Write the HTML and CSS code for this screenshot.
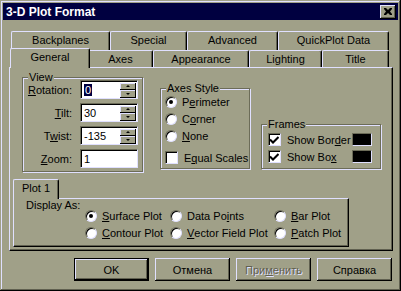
FILE: index.html
```html
<!DOCTYPE html>
<html lang="en">
<head>
  <meta charset="UTF-8">
  <title>3-D Plot Format</title>
  <link rel="stylesheet" href="styles.css">
</head>
<body>
  <div class="window">
    <div class="titlebar">
      <span class="title">3-D Plot Format</span>
      <div class="close">
        <svg width="8" height="7" viewBox="0 0 8 7"><path d="M0 0h2l2 2 2-2h2v1L6 3.5 8 6v1H6L4 5 2 7H0V6l2-2.5L0 1z" fill="#000"/></svg>
      </div>
    </div>

    <div class="tabs">
      <div class="tab-row back">
        <div class="tab" style="width:99px">Backplanes</div>
        <div class="tab" style="width:77px">Special</div>
        <div class="tab" style="width:91px">Advanced</div>
        <div class="tab" style="width:111px">QuickPlot Data</div>
      </div>
      <div class="tab-row front">
        <div class="tab active" style="width:80px">General</div>
        <div class="tab" style="width:65px">Axes</div>
        <div class="tab" style="width:96px">Appearance</div>
        <div class="tab" style="width:73px">Lighting</div>
        <div class="tab" style="width:67px">Title</div>
      </div>
    </div>

    <div class="panel">
      <div class="groups">
        <div class="group view">
          <span class="group-label">View</span>
          <div class="field-row">
            <span class="field-label"><u>R</u>otation:</span>
            <div class="field"><span class="sel">0</span><div class="spin"><div class="spin-btn"><i class="up"></i></div><div class="spin-btn"><i class="down"></i></div></div></div>
          </div>
          <div class="field-row">
            <span class="field-label"><u>T</u>ilt:</span>
            <div class="field"><span>30</span><div class="spin"><div class="spin-btn"><i class="up"></i></div><div class="spin-btn"><i class="down"></i></div></div></div>
          </div>
          <div class="field-row">
            <span class="field-label">T<u>w</u>ist:</span>
            <div class="field"><span>-135</span><div class="spin"><div class="spin-btn"><i class="up"></i></div><div class="spin-btn"><i class="down"></i></div></div></div>
          </div>
          <div class="field-row">
            <span class="field-label"><u>Z</u>oom:</span>
            <div class="field"><span>1</span></div>
          </div>
        </div>

        <div class="group axes">
          <span class="group-label">Axes Style</span>
          <div class="opt"><span class="radio checked"></span>P<u>e</u>rimeter</div>
          <div class="opt"><span class="radio"></span>C<u>o</u>rner</div>
          <div class="opt"><span class="radio"></span><u>N</u>one</div>
          <div class="opt gap"><span class="check"></span>E<u>q</u>ual Scales</div>
        </div>

        <div class="group frames">
          <span class="group-label">Frames</span>
          <div class="opt"><span class="check on"><svg width="9" height="8" viewBox="0 0 9 8"><path d="M0 3.5l3 3L8.5 1" stroke="#000" stroke-width="2" fill="none"/></svg></span><span class="grow">Show Bor<u>d</u>er</span><span class="swatch"></span></div>
          <div class="opt"><span class="check on"><svg width="9" height="8" viewBox="0 0 9 8"><path d="M0 3.5l3 3L8.5 1" stroke="#000" stroke-width="2" fill="none"/></svg></span><span class="grow">Show Bo<u>x</u></span><span class="swatch"></span></div>
        </div>
      </div>

      <div class="subtabs">
        <div class="tab sub active">Plot 1</div>
      </div>
      <div class="subpanel">
        <span class="display-label">Display As:</span>
        <div class="plot-grid">
          <div class="opt"><span class="radio checked"></span><u>S</u>urface Plot</div>
          <div class="opt"><span class="radio"></span>Data Po<u>i</u>nts</div>
          <div class="opt"><span class="radio"></span><u>B</u>ar Plot</div>
          <div class="opt"><span class="radio"></span><u>C</u>ontour Plot</div>
          <div class="opt"><span class="radio"></span><u>V</u>ector Field Plot</div>
          <div class="opt"><span class="radio"></span><u>P</u>atch Plot</div>
        </div>
      </div>
    </div>

    <div class="buttons">
      <button class="default">OK</button>
      <button>Отмена</button>
      <button class="disabled">При<u>м</u>енить</button>
      <button>Справка</button>
    </div>
  </div>
</body>
</html>
```

FILE: styles.css
```css
body {
  margin: 0;
  font-family: "Liberation Sans", Arial, sans-serif;
  font-size: 11px;
  color: #000;
}
.window {
  width: 401px;
  height: 291px;
  box-sizing: border-box;
  padding: 3px;
  background: #a0a088;
  box-shadow: inset -1px -1px #000, inset 1px 1px #a0a088, inset -2px -2px #606050, inset 2px 2px #e0e0ff;
}
.titlebar {
  height: 17px;
  background: #000040;
  display: flex;
  align-items: center;
  justify-content: space-between;
  padding: 0 2px 0 3px;
}
.title {
  color: #fff;
  font-weight: bold;
  font-size: 12px;
}
.close {
  width: 16px;
  height: 14px;
  background: #a0a088;
  box-shadow: inset -1px -1px #000, inset 1px 1px #e0e0ff, inset -2px -2px #606050;
  display: flex;
  align-items: center;
  justify-content: center;
}

/* tabs */
.tabs {
  margin: 11px 0 0 8px;
}
.tab-row {
  display: flex;
}
.tab-row.back {
  height: 19px;
}
.tab-row.front {
  height: 17px;
  margin-left: 1px;
}
.tab {
  box-sizing: border-box;
  height: 100%;
  background: #a0a088;
  border: 1px solid #e0e0ff;
  border-bottom: none;
  border-right-color: #000;
  border-radius: 2px 2px 0 0;
  box-shadow: inset -1px 0 #606050;
  text-align: center;
  line-height: 16px;
}
.tab.active {
  height: 20px;
  margin: -2px -2px 0;
  padding-bottom: 3px;
  position: relative;
  z-index: 1;
}

/* main panel */
.panel {
  box-sizing: border-box;
  width: 384px;
  height: 184px;
  margin-left: 6px;
  border: 1px solid;
  border-color: #e0e0ff #000 #000 #e0e0ff;
  box-shadow: inset -1px -1px #606050;
  padding: 9px 0 0 12px;
}
.groups {
  display: flex;
  align-items: flex-start;
}
.group {
  position: relative;
  box-sizing: border-box;
  border: 1px solid #6c6c58;
  box-shadow: inset 1px 1px #e0e0ff, 1px 1px #e0e0ff;
}
.group-label {
  position: absolute;
  top: -7px;
  left: 5px;
  padding: 0 1px;
  background: #a0a088;
  line-height: 13px;
}
.view {
  width: 121px;
  height: 95px;
  padding-top: 2px;
}
.axes {
  width: 90px;
  height: 81px;
  margin: 11px 0 0 17px;
  padding: 4px 0 0 4px;
}
.frames {
  width: 120px;
  height: 45px;
  margin: 47px 0 0 11px;
  padding: 6px 8px 0 6px;
}
.field-row {
  display: flex;
  align-items: center;
  height: 19px;
  margin-bottom: 4px;
}
.field-label {
  width: 49px;
  text-align: right;
  margin-right: 8px;
}
.field {
  box-sizing: border-box;
  width: 58px;
  height: 19px;
  background: #fff;
  border: 1px solid;
  border-color: #6c6c58 #e0e0ff #e0e0ff #6c6c58;
  box-shadow: inset 1px 1px #000;
  display: flex;
  align-items: center;
  justify-content: space-between;
  padding: 1px 1px 0 3px;
}
.sel {
  background: #000040;
  color: #fff;
  padding: 0 1px;
}
.spin {
  display: flex;
  flex-direction: column;
  width: 16px;
  height: 15px;
}
.spin-btn {
  flex: 1;
  background: #a0a088;
  box-shadow: inset -1px -1px #000, inset 1px 1px #e0e0ff;
  display: flex;
  align-items: center;
  justify-content: center;
}
.spin-btn i {
  width: 0;
  height: 0;
  border-left: 2px solid transparent;
  border-right: 2px solid transparent;
}
.spin-btn .up {
  border-bottom: 2px solid #000;
}
.spin-btn .down {
  border-top: 2px solid #000;
}

/* radios and checks */
.opt {
  display: flex;
  align-items: center;
  height: 17px;
  white-space: nowrap;
}
.opt.gap {
  margin-top: 5px;
}
.radio {
  box-sizing: border-box;
  width: 12px;
  height: 12px;
  border-radius: 50%;
  background: #fff;
  border: 1px solid;
  border-color: #6c6c58 #e0e0ff #e0e0ff #6c6c58;
  box-shadow: inset 1px 1px #000;
  margin-right: 5px;
  display: flex;
  align-items: center;
  justify-content: center;
}
.radio.checked::after {
  content: "";
  width: 4px;
  height: 4px;
  border-radius: 50%;
  background: #000;
}
.check {
  box-sizing: border-box;
  width: 13px;
  height: 13px;
  background: #fff;
  border: 1px solid;
  border-color: #6c6c58 #e0e0ff #e0e0ff #6c6c58;
  box-shadow: inset 1px 1px #000;
  margin-right: 6px;
  display: flex;
  align-items: center;
  justify-content: center;
}
.grow {
  flex: 1;
}
.swatch {
  box-sizing: border-box;
  width: 20px;
  height: 13px;
  background: #000;
  border: 1px solid;
  border-color: #6c6c58 #e0e0ff #e0e0ff #6c6c58;
}

/* plot sub tabs */
.subtabs {
  display: flex;
  height: 19px;
  margin: 7px 0 0 -9px;
}
.tab.sub.active {
  width: 46px;
  height: 20px;
  margin: 0;
  padding: 0;
  line-height: 16px;
}
.subpanel {
  box-sizing: border-box;
  width: 336px;
  height: 49px;
  margin-left: -9px;
  border: 1px solid;
  border-color: #e0e0ff #000 #000 #e0e0ff;
  box-shadow: inset -1px -1px #606050;
  display: flex;
  align-items: flex-start;
  padding-left: 12px;
}
.display-label {
  width: 59px;
  line-height: 13px;
}
.plot-grid {
  display: grid;
  grid-template-columns: 85px 104px 1fr;
  grid-auto-rows: 17px;
  margin-top: 8px;
}

/* bottom buttons */
.buttons {
  display: flex;
  justify-content: flex-end;
  gap: 6px;
  margin: 7px 6px 0 0;
}
button {
  box-sizing: border-box;
  width: 75px;
  height: 23px;
  padding: 0;
  font-family: inherit;
  font-size: 11px;
  color: #000;
  background: #a0a088;
  border: none;
  box-shadow: inset -1px -1px #000, inset 1px 1px #e0e0ff, inset -2px -2px #606050;
}
button.default {
  border: 1px solid #000;
}
button.disabled {
  color: #606050;
  text-shadow: 1px 1px #e0e0ff;
}
```
